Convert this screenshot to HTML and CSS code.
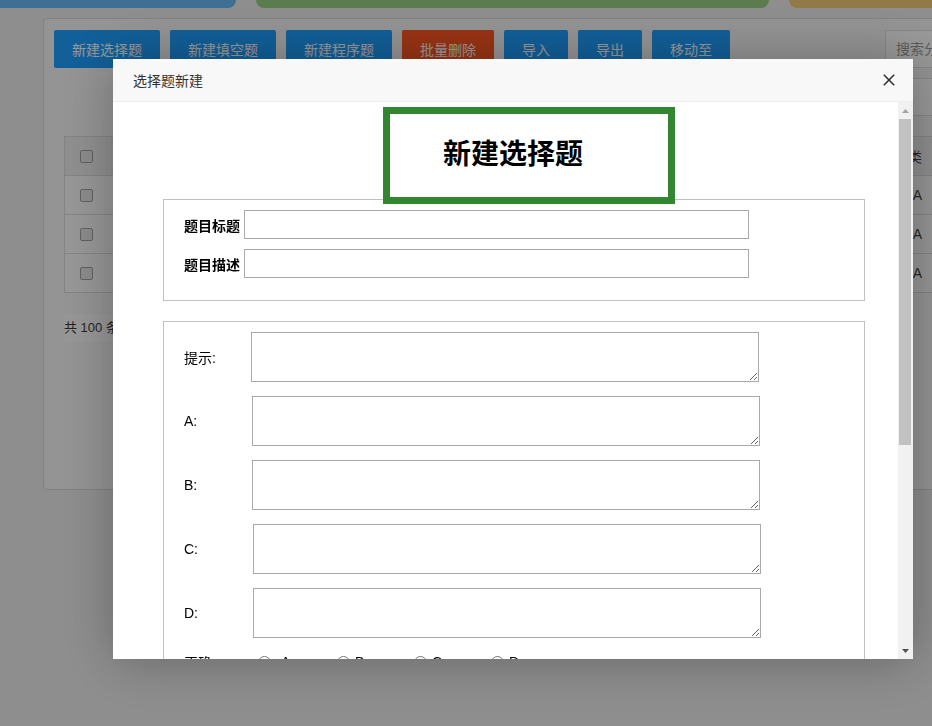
FILE: index.html
```html
<!DOCTYPE html>
<html lang="zh-CN">
<head>
<meta charset="utf-8">
<title>题库管理</title>
<link rel="stylesheet" href="styles.css">
</head>
<body>
<div class="stats">
  <div class="stat s-blue"></div>
  <div class="stat s-green"></div>
  <div class="stat s-yellow"></div>
</div>
<div class="panel">
  <div class="toolbar">
    <button class="btn">新建选择题</button>
    <button class="btn">新建填空题</button>
    <button class="btn">新建程序题</button>
    <button class="btn btn-danger">批量删除</button>
    <button class="btn">导入</button>
    <button class="btn">导出</button>
    <button class="btn">移动至</button>
    <div class="search-col">
      <input class="search" placeholder="搜索分类">
      <div class="sub-box"></div>
    </div>
  </div>
  <div class="grid">
    <div class="trow thead">
      <div class="cell c-chk"><span class="cb"></span></div>
      <div class="cell"></div>
      <div class="cell c-end">分类</div>
    </div>
    <div class="trow">
      <div class="cell c-chk"><span class="cb"></span></div>
      <div class="cell"></div>
      <div class="cell c-end">A</div>
    </div>
    <div class="trow">
      <div class="cell c-chk"><span class="cb"></span></div>
      <div class="cell"></div>
      <div class="cell c-end">A</div>
    </div>
    <div class="trow">
      <div class="cell c-chk"><span class="cb"></span></div>
      <div class="cell"></div>
      <div class="cell c-end">A</div>
    </div>
  </div>
  <div class="pager"><span class="count">共 100 条</span></div>
</div>

<div class="shade"></div>

<div class="layer">
  <div class="layer-head">
    <span class="layer-title">选择题新建</span>
    <svg class="close" width="12" height="12" viewBox="0 0 12 12"><path d="M0.8 0.8 L11.2 11.2 M11.2 0.8 L0.8 11.2" stroke="#2b2b2b" stroke-width="1.5" fill="none"/></svg>
  </div>
  <div class="layer-body">
    <div class="scroll-area">
      <div class="form">
        <div class="title-box">新建选择题</div>
        <div class="group">
          <div class="line"><label class="strong">题目标题</label><input class="text-in" type="text"></div>
          <div class="line"><label class="strong">题目描述</label><input class="text-in" type="text"></div>
        </div>
        <div class="group group-2">
          <div class="row"><label>提示:</label><textarea class="ta-hint"></textarea></div>
          <div class="row"><label>A:</label><textarea></textarea></div>
          <div class="row"><label>B:</label><textarea></textarea></div>
          <div class="row"><label>C:</label><textarea class="ta-wide"></textarea></div>
          <div class="row"><label>D:</label><textarea class="ta-wide"></textarea></div>
          <div class="row">
            <label>正确:</label>
            <div class="opts">
              <label class="opt first"><input type="radio" name="ans">A</label>
              <label class="opt"><input type="radio" name="ans">B</label>
              <label class="opt"><input type="radio" name="ans">C</label>
              <label class="opt"><input type="radio" name="ans">D</label>
            </div>
          </div>
          <div class="row"><label>难度:</label><select class="sel"><option>简单</option><option>中等</option><option>困难</option></select></div>
          <div class="row"><label>分值:</label><input class="text-in small" type="text"></div>
        </div>
      </div>
    </div>
    <div class="vscroll">
      <div class="sb-btn"><svg width="7" height="4" viewBox="0 0 7 4"><path d="M0 4 L3.5 0 L7 4 Z" fill="#a3a3a3"/></svg></div>
      <div class="sb-track"><div class="sb-thumb"></div></div>
      <div class="sb-btn"><svg width="7" height="4" viewBox="0 0 7 4"><path d="M0 0 L3.5 4 L7 0 Z" fill="#505050"/></svg></div>
    </div>
  </div>
</div>
</body>
</html>
```
FILE: styles.css
```css
html, body {
  margin: 0;
  height: 726px;
  overflow: hidden;
}
body {
  background: #ededed;
  font-family: "Liberation Sans", "Noto Sans CJK SC", sans-serif;
  font-size: 14px;
  color: #333;
}

/* background page */
.stats {
  display: flex;
  gap: 20px;
  height: 8px;
  margin-left: -10px;
}
.stat { border-radius: 0 0 8px 8px; flex: none; }
.s-blue { width: 246px; background: #69bbf7; }
.s-green { width: 513px; background: #96cf82; }
.s-yellow { width: 220px; background: #f3cb78; }

.panel {
  margin: 10px 0 0 43px;
  width: 1000px;
  height: 472px;
  box-sizing: border-box;
  border: 1px solid #d8d8d8;
  border-radius: 4px;
  background: #f7f7f7;
  padding: 11px 10px;
}
.toolbar {
  display: flex;
  align-items: flex-start;
  gap: 10px;
}
.btn {
  flex: none;
  white-space: nowrap;
  height: 38px;
  padding: 0 18px;
  border: 0;
  border-radius: 2px;
  background: #1e9fff;
  color: #fff;
  font-family: inherit;
  font-size: 14px;
}
.btn-danger { background: #ff5722; }
.search-col {
  flex: none;
  margin-left: 145px;
  display: flex;
  flex-direction: column;
  gap: 10px;
}
.search {
  width: 160px;
  height: 38px;
  box-sizing: border-box;
  border: 1px solid #e0e0e0;
  padding: 0 10px;
  font-family: inherit;
  font-size: 14px;
  background: #fff;
}
.search::placeholder { color: #999; }
.sub-box {
  width: 160px;
  height: 38px;
  box-sizing: border-box;
  border: 1px solid #e0e0e0;
  background: #fff;
}

.grid {
  margin: 20px 0 0 10px;
  width: 886px;
  border: 1px solid #dcdcdc;
  border-bottom: 0;
}
.trow {
  display: grid;
  grid-template-columns: 49px 775px 60px;
  height: 39px;
  box-sizing: border-box;
  border-bottom: 1px solid #dcdcdc;
  background: #fbfbfb;
}
.thead { background: #efefef; }
.cell {
  border-right: 1px solid #dcdcdc;
  display: flex;
  align-items: center;
  color: #444;
}
.c-chk { padding-left: 15px; }
.c-end { justify-content: flex-end; padding-right: 26px; }
.cb {
  width: 13px;
  height: 13px;
  box-sizing: border-box;
  border: 1px solid #a2a2a2;
  border-radius: 2px;
  background: #e8e8e8;
}
.pager { margin: 21px 0 0 10px; }
.count {
  display: inline-block;
  height: 28px;
  line-height: 28px;
  padding-right: 60px;
  background: #fcfcfc;
  color: #3a3a3a;
  font-size: 13px;
}

/* modal */
.shade {
  position: fixed;
  inset: 0;
  background: rgba(0, 0, 0, 0.4);
}
.layer {
  position: fixed;
  left: 113px;
  top: 59px;
  width: 800px;
  height: 600px;
  background: #fff;
  box-shadow: 1px 1px 50px rgba(0, 0, 0, 0.3);
  display: flex;
  flex-direction: column;
}
.layer-head {
  flex: none;
  height: 42px;
  border-bottom: 1px solid #eee;
  background: #f8f8f8;
  padding: 0 18px 0 20px;
  display: flex;
  align-items: center;
  justify-content: space-between;
  color: #333;
  font-size: 14px;
}
.close { display: block; }
.layer-body {
  flex: 1;
  min-height: 0;
  display: flex;
  color: #000;
}
.scroll-area {
  flex: 1;
  overflow: hidden;
}
.vscroll {
  flex: none;
  width: 15px;
  background: #f1f1f1;
  display: flex;
  flex-direction: column;
}
.sb-btn {
  flex: none;
  height: 17px;
  display: flex;
  align-items: center;
  justify-content: center;
}
.sb-btn svg { display: block; }
.sb-track {
  flex: 1;
  padding-left: 1px;
}
.sb-thumb {
  width: 12px;
  height: 326px;
  background: #c1c1c1;
}

.form { padding: 5px 0 40px 50px; }
.title-box {
  margin-left: 220px;
  width: 292px;
  height: 97px;
  box-sizing: border-box;
  border: 7px solid #31862f;
  padding: 0 0 8px 53px;
  display: flex;
  align-items: center;
  font-family: "Noto Sans CJK SC", sans-serif;
  font-size: 28px;
  font-weight: bold;
  position: relative;
  z-index: 1;
  background: #fff;
  margin-bottom: -5px;
}
.group {
  width: 702px;
  box-sizing: border-box;
  border: 1px solid #c0c0c0;
  padding: 10px 20px 22px;
}
.group + .group { margin-top: 20px; }
.line {
  display: flex;
  align-items: center;
  gap: 4px;
}
.line + .line { margin-top: 10px; }
.strong { font-weight: bold; }
.text-in {
  width: 505px;
  height: 29px;
  box-sizing: border-box;
  border: 1px solid #a9a9a9;
  margin: 0;
}
.text-in.small { width: 200px; }
.row {
  display: grid;
  grid-template-columns: 68px auto;
  justify-content: start;
  align-items: center;
}
.row + .row { margin-top: 14px; }
textarea {
  display: block;
  width: 508px;
  height: 50px;
  box-sizing: border-box;
  border: 1px solid #a9a9a9;
  margin: 0;
  font-family: inherit;
}
.ta-hint { margin-left: -1px; }
.ta-wide { margin-left: 1px; }
.opts {
  display: flex;
  padding-left: 6px;
}
.opt {
  width: 77px;
  display: flex;
  align-items: center;
  gap: 5px;
  line-height: 20px;
}
.opt.first { gap: 10px; width: 79px; }
.opt input { margin: 0; width: 13px; height: 13px; }
.sel {
  width: 200px;
  height: 29px;
  border: 1px solid #a9a9a9;
  background: #fff;
}
```
